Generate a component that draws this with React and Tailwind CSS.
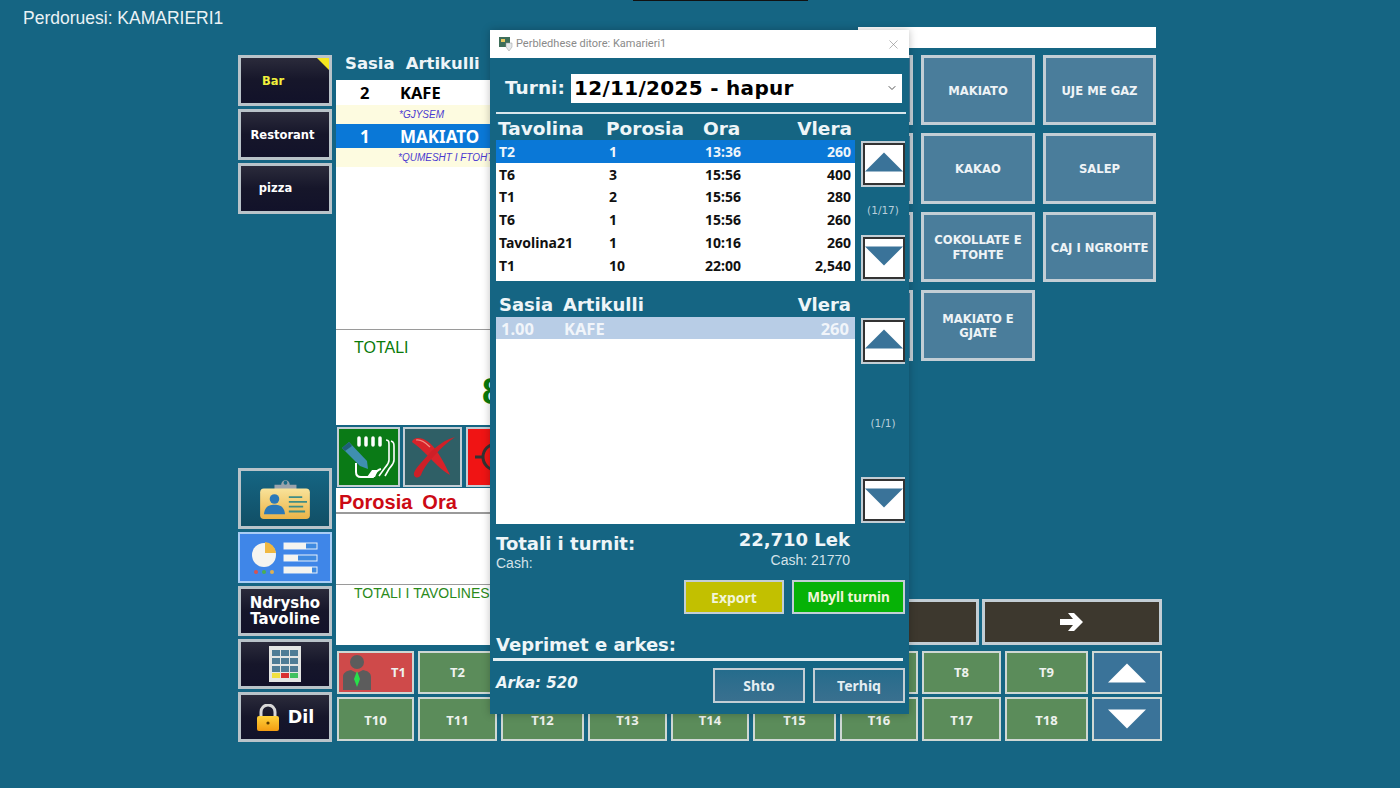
import React from "react";
import { ChevronDown, X } from "lucide-react";

const dejavu = "font-['DejaVu_Sans',sans-serif]";
const noto = "font-['Noto_Sans',sans-serif]";
const liberation = "font-['Liberation_Sans',Arial,sans-serif]";

const darkBtn =
  "flex items-center justify-center border-[3px] border-[#b9c3c9] bg-gradient-to-b from-[#2b2b3b] via-[#16162a] to-[#12122a] text-white font-bold";

const orders = [
  { table: "T2", order: "1", time: "13:36", value: "260", active: true },
  { table: "T6", order: "3", time: "15:56", value: "400" },
  { table: "T1", order: "2", time: "15:56", value: "280" },
  { table: "T6", order: "1", time: "15:56", value: "260" },
  { table: "Tavolina21", order: "1", time: "10:16", value: "260" },
  { table: "T1", order: "10", time: "22:00", value: "2,540" },
];

const products = [
  "", "MAKIATO", "UJE ME GAZ",
  "", "KAKAO", "SALEP",
  "", "COKOLLATE E FTOHTE", "CAJ I NGROHTE",
  "", "MAKIATO E GJATE",
];

// the labels of T3 to T7 sit behind the dialog
const tables = [
  ["T1", "T2", "", "", "", "", "", "T8", "T9"],
  ["T10", "T11", "T12", "T13", "T14", "T15", "T16", "T17", "T18"],
];

const Triangle = ({ down, fill }) => (
  <svg viewBox="0 0 40 20" className="h-[20px] w-[38px]">
    <path d={down ? "M0 0H40L20 20Z" : "M20 0L40 20H0Z"} fill={fill} />
  </svg>
);

const ScrollBtn = ({ down }) => (
  <div className="flex h-[46px] w-[44px] border-[2px] border-[#c3ced5] bg-white">
    <div className="flex flex-1 items-start justify-center border-[2px] border-[#333] pt-[7px]">
      <Triangle down={down} fill="#3a7399" />
    </div>
  </div>
);

const BadgeIcon = () => (
  <svg viewBox="0 0 56 46" className="h-[44px] w-[54px]">
    <defs>
      <linearGradient id="badgeCard" x1="0" y1="0" x2="0" y2="1">
        <stop offset="0" stopColor="#f9e39a" />
        <stop offset="1" stopColor="#eab347" />
      </linearGradient>
    </defs>
    <path d="M17 14V8h7a4.5 4.5 0 0 1 9 0h7v6z" fill="#9aa3ab" />
    <circle cx="28.5" cy="6" r="2" fill="#1a6a85" />
    <rect x="2" y="12" width="52" height="32" rx="4" fill="url(#badgeCard)" />
    <circle cx="17" cy="23" r="5" fill="#2a78b8" />
    <path d="M6 39c1-9 6-10 11-10s10 1 11 10z" fill="#2a78b8" />
    <path d="M32 21h14M32 26h19M32 31h15M32 36h17" stroke="#3f8c85" strokeWidth="2" />
  </svg>
);

const ReportIcon = () => (
  <svg viewBox="0 0 70 36" className="h-[36px] w-[70px]">
    <circle cx="14" cy="15" r="12" fill="#f4f4f0" />
    <path d="M15 2a12 12 0 0 1 11 11H15z" fill="#f0b840" />
    <circle cx="6" cy="32" r="2" fill="#d9534f" />
    <circle cx="14" cy="32" r="2" fill="#4caf50" />
    <circle cx="22" cy="32" r="2" fill="#e0b050" />
    <rect x="34" y="3" width="33" height="6" fill="#3f8ae0" stroke="#e8f0fa" strokeWidth="1" />
    <rect x="34" y="3" width="22" height="6" fill="#f4f4f0" />
    <rect x="34" y="15" width="33" height="6" fill="#3f8ae0" stroke="#e8f0fa" strokeWidth="1" />
    <rect x="34" y="15" width="14" height="6" fill="#f4f4f0" />
    <rect x="34" y="27" width="33" height="6" fill="#3f8ae0" stroke="#e8f0fa" strokeWidth="1" />
    <rect x="34" y="27" width="28" height="6" fill="#f4f4f0" />
  </svg>
);

const CalcIcon = () => (
  <svg viewBox="0 0 32 36" className="h-[36px] w-[32px]">
    <rect width="32" height="36" fill="#e4e6e4" />
    {[4, 12, 20].map((y) =>
      [3, 12, 21].map((x) => <rect key={`${x}-${y}`} x={x} y={y} width="8" height="6" fill="#4f7d96" />)
    )}
    <rect x="3" y="27" width="8" height="5" fill="#f0e040" />
    <rect x="12" y="27" width="8" height="5" fill="#d83030" />
    <rect x="21" y="27" width="8" height="5" fill="#40c060" />
  </svg>
);

const LockIcon = () => (
  <svg viewBox="0 0 24 28" className="h-[28px] w-[24px]">
    <defs>
      <linearGradient id="lockBody" x1="0" y1="0" x2="0" y2="1">
        <stop offset="0" stopColor="#ffd23a" />
        <stop offset="1" stopColor="#f39c12" />
      </linearGradient>
    </defs>
    <path d="M5 13V8a7 7 0 0 1 14 0v5" fill="none" stroke="#d8d8d8" strokeWidth="3" />
    <rect x="1" y="12" width="22" height="15" rx="2" fill="url(#lockBody)" />
    <circle cx="12" cy="19" r="1.6" fill="#5a3a00" />
  </svg>
);

const HandIcon = () => (
  <svg viewBox="0 0 56 52" className="h-[52px] w-[56px]">
    <path d="M18 7v7M25 7v7M32 7v7M39 7v7" stroke="#fff" strokeWidth="3.5" strokeLinecap="round" />
    <path d="M45 9c3 0 3 2 3 5v15c0 4-3 6-5 9l-5 7M50 10c3 1 3 3 3 6v13c0 4-3 6-5 9l-4 7" fill="none" stroke="#fff" strokeWidth="1.6" />
    <path d="M15 32v9c0 3 2 5 5 5h12c2-3 3-7 8-8" fill="none" stroke="#fff" strokeWidth="2" />
    <path d="M26 46l5-7h6l-3 7z" fill="#fff" />
    <path d="M1 17l7-6 18 19 1 8-8-3z" fill="#3f8fb0" />
    <path d="M1 17l7-6 3 4-7 5z" fill="#205f78" />
  </svg>
);

const CrossIcon = () => (
  <svg viewBox="0 0 46 46" className="h-[46px] w-[46px]">
    <path d="M2 8C3 3 11 3 17 7 25 12 33 26 40 41 31 36 24 28 19 23 13 17 8 12 2 8Z" fill="#d8232a" />
    <path d="M45 3C35 6 26 12 19 20 13 27 6 33 4 39 3 44 9 45 11 41 14 33 20 26 26 20 32 13 38 8 45 3Z" fill="#cf1f27" />
    <path d="M6 6C11 5 16 9 20 13" fill="none" stroke="#f08a80" strokeWidth="1.2" />
  </svg>
);

const EuroIcon = () => (
  <svg viewBox="0 0 46 50" className="h-[50px] w-[46px]">
    <rect x="19" y="0" width="6" height="10" rx="2" fill="#fff" />
    <circle cx="23" cy="25" r="13" fill="none" stroke="#333" strokeWidth="3" />
    <path d="M2 25h8M36 25h8" stroke="#333" strokeWidth="3" />
    <text x="23" y="31" textAnchor="middle" fontSize="17" fontWeight="700" fill="#333" fontFamily="Liberation Sans">€</text>
  </svg>
);

const WaiterIcon = () => (
  <svg viewBox="0 0 32 38" className="h-[38px] w-[32px]">
    <circle cx="16" cy="8" r="7" fill="#5c5c5c" />
    <path d="M2 36V23c0-4 3-6 8-7l6 3 6-3c5 1 8 3 8 7v13z" fill="#5c5c5c" />
    <path d="M16 17l3 8-3 8-3-8z" fill="#28e04a" />
  </svg>
);

const TableBtn = ({ name, busy, low }) =>
  busy ? (
    <div className="flex items-center justify-between border-[2px] border-[#cfd8d4] bg-[#cf4a4a] pl-[2px] pr-[6px] text-[13px] font-bold text-[#eef2ee]">
      <WaiterIcon />
      <span>{name}</span>
    </div>
  ) : (
    <div className={`flex items-center justify-center border-[2px] border-[#cfd8d4] bg-[#5b8c5a] text-[13px] font-bold text-[#eef2ee] ${low ? "pt-[3px]" : ""}`}>
      {name}
    </div>
  );

const App = () => {
  return (
    <div className={`relative h-[788px] w-[1400px] overflow-hidden bg-[#156583] ${noto}`}>
      <div className="absolute left-[633px] top-0 h-px w-[175px] bg-[#111]" />
      <div className={`h-[27px] pl-[23px] pt-[8px] text-[17.5px] leading-[20px] text-[#eaf2f5] ${liberation}`}>
        Perdoruesi: KAMARIERI1
      </div>

      <div className="flex gap-[4px] pl-[238px]">
        {/* left column */}
        <div className="flex h-[715px] w-[94px] flex-col justify-between pt-[28px]">
          <div className={`flex flex-col gap-[3px] text-[12px] ${dejavu}`}>
            <div className={`${darkBtn} relative h-[51px] pr-[24px] pt-[3px] !text-[#f2f03c] text-[11.5px]`}>
              Bar
              <span className="absolute right-0 top-0 h-0 w-0 border-l-[12px] border-t-[12px] border-l-transparent border-t-[#f5e61e]" />
            </div>
            <div className={`${darkBtn} h-[51px] pr-[5px] pt-[2px] text-[11.5px]`}>Restorant</div>
            <div className={`${darkBtn} h-[51px] pr-[19px] text-[11.5px]`}>pizza</div>
          </div>
          <div className="flex flex-col gap-[3px]">
            <div className="flex h-[61px] items-center justify-center border-[3px] border-[#b9c3c9] bg-gradient-to-b from-[#156583] to-[#114f66]">
              <BadgeIcon />
            </div>
            <div className="flex h-[51px] items-center justify-center border-[2px] border-[#a9cdf5] bg-[#3f86e8]">
              <ReportIcon />
            </div>
            <div className={`${darkBtn} h-[50px] text-center text-[15px] leading-[16px] ${dejavu}`}>
              Ndrysho
              <br />
              Tavoline
            </div>
            <div className={`${darkBtn} h-[50px]`}>
              <CalcIcon />
            </div>
            <div className={`${darkBtn} h-[50px] gap-[8px] pt-[1px] text-[17.5px] ${dejavu}`}>
              <LockIcon />
              Dil
            </div>
          </div>
        </div>

        {/* order and products */}
        <div className="flex w-[826px] flex-col">
          <div className="flex h-[618px]">
            <div className="w-[341px] pt-[28px]">
              <div className={`flex h-[25px] items-center gap-[11px] pb-[6px] pl-[9px] text-[16.5px] font-bold text-[#eef5f8] ${dejavu}`}>
                <span>Sasia</span>
                <span>Artikulli</span>
              </div>
              <div className="h-[345px] bg-white">
                <div className="h-[249px]">
                  <div className="flex h-[25px] items-center pt-[1px] text-[16.5px] font-bold text-black">
                    <span className="w-[64px] pl-[24px]">2</span>
                    <span>KAFE</span>
                  </div>
                  <div className={`h-[19px] bg-[#fdfbe0] pl-[63px] text-[10px] italic leading-[19px] text-[#4a3ad0] ${liberation}`}>
                    *GJYSEM
                  </div>
                  <div className="flex h-[24px] items-center bg-[#0a78d7] pt-[2px] text-[17px] font-bold text-white">
                    <span className="w-[64px] pl-[24px]">1</span>
                    <span>MAKIATO</span>
                  </div>
                  <div className={`h-[19px] bg-[#fdfbe0] pl-[62px] text-[10px] italic leading-[19px] text-[#4a3ad0] ${liberation}`}>
                    *QUMESHT I FTOHTE
                  </div>
                </div>
                <div className="border-t border-[#9a9a9a] pl-[18px] pt-[9px]">
                  <div className={`text-[16px] leading-[18px] text-[#0a7a0a] ${liberation}`}>TOTALI</div>
                  <div className={`pl-[128px] pt-[15px] text-[36px] font-bold leading-[40px] text-[#0a7a0a] ${liberation}`}>820</div>
                </div>
              </div>
              <div className="flex h-[63px] items-center gap-[3px] pl-[1px]">
                <div className="flex h-[60px] w-[63px] items-center justify-center border-[2px] border-[#c3ced5] bg-[#0a7a16]">
                  <HandIcon />
                </div>
                <div className="flex h-[60px] w-[59px] items-center justify-center border-[2px] border-[#c3ced5] bg-[#2f5f66]">
                  <CrossIcon />
                </div>
                <div className="ml-[1px] flex h-[60px] w-[59px] items-center justify-center border-[2px] border-[#c3ced5] bg-[#f01414]">
                  <EuroIcon />
                </div>
              </div>
              <div className="h-[157px] bg-white">
                <div className={`flex h-[26px] items-center gap-[10px] border-b-[2px] border-[#9a9a9a] pl-[3px] pt-[3px] text-[20px] font-bold text-[#cc0a14] ${liberation}`}>
                  <span>Porosia</span>
                  <span>Ora</span>
                </div>
                <div className="h-[70px]" />
                <div className={`border-t border-[#9a9a9a] pl-[18px] pt-[1px] text-[14px] leading-[15px] text-[#2a8a1a] ${liberation}`}>
                  TOTALI I TAVOLINES
                </div>
              </div>
            </div>

            <div className={`flex flex-1 flex-col ${dejavu}`}>
              <div className="ml-auto mr-[6px] h-[21px] w-[298px] bg-white" />
              <div className="mt-[7px] grid grid-cols-[114px_114px_113px] justify-end gap-x-[8px] gap-y-[8px] pr-[6px]">
                {products.map((name, i) => (
                  <div
                    key={i}
                    className="flex h-[70.4px] items-center justify-center border-[3px] border-[#c3ced5] bg-[#4a7d9b] px-[3px] pt-[2px] text-center text-[11.6px] font-bold leading-[14.5px] text-[#eef3f6]"
                  >
                    {name}
                  </div>
                ))}
              </div>
              <div className="mt-auto flex h-[46px] justify-end gap-[3px]">
                <div className="w-[180px] border-[3px] border-[#c3ced5] bg-[#3d382e]" />
                <div className="flex w-[180px] items-center justify-center border-[3px] border-[#c3ced5] bg-[#3d382e]">
                  <svg viewBox="0 0 26 22" className="h-[22px] w-[26px]">
                    <path d="M1 8h13l-5-6h6l9 9-9 9H9l5-6H1z" fill="#fff" />
                  </svg>
                </div>
              </div>
            </div>
          </div>

          {/* tables */}
          <div className={`mt-[6px] grid grid-cols-[77px_79px_83px_79px_78px_83px_78px_79px_83px_70px] grid-rows-[43px_44px] gap-x-[4px] gap-y-[3px] pl-[1px] ${noto}`}>
            {tables[0].map((t, i) => (
              <TableBtn key={i} name={t} busy={t === "T1"} />
            ))}
            <div className="flex items-center justify-center border-[2px] border-[#cfd8d4] bg-[#3a7399]">
              <Triangle fill="#fff" />
            </div>
            {tables[1].map((t) => (
              <TableBtn key={t} name={t} low />
            ))}
            <div className="flex items-center justify-center border-[2px] border-[#cfd8d4] bg-[#3a7399]">
              <Triangle down fill="#fff" />
            </div>
          </div>
        </div>
      </div>

      {/* daily summary dialog */}
      <div className="absolute left-[490px] top-[30px] h-[684px] w-[419px] bg-[#156583] shadow-[0_0_8px_rgba(0,0,0,0.25)]">
        <div className="flex h-[28px] items-center justify-between bg-white pl-[9px] pr-[8px] font-['Roboto',sans-serif] text-[11px] text-[#8a8a8a]">
          <div className="flex items-center gap-[3px]">
            <svg viewBox="0 0 14 14" className="h-[14px] w-[14px]">
              <rect x="0" y="0" width="11" height="10" fill="#3e6e5a" />
              <rect x="2" y="2" width="4" height="3" fill="#e8c860" />
              <path d="M7 6h6v4l-3 4-3-4z" fill="#e4e8ea" stroke="#999" strokeWidth="0.5" />
            </svg>
            <span>Perbledhese ditore: Kamarieri1</span>
          </div>
          <X size={15} strokeWidth={1} color="#888" />
        </div>

        <div className={`flex h-[54px] items-center pl-[15px] pr-[7px] pt-[6px] ${dejavu}`}>
          <span className="w-[66px] text-[18.5px] font-bold text-[#eef5f8]">Turni:</span>
          <div className="flex h-[29px] flex-1 items-center justify-between bg-white pl-[3px] pr-[4px] text-[20px] font-bold tracking-[0.3px] text-black">
            12/11/2025 - hapur
            <ChevronDown size={12} color="#555" />
          </div>
        </div>

        <div className="ml-[6px] mr-[3px] h-[2px] bg-[#d8e6ec]" />

        <div className="flex pl-[6px] pt-[4px]">
          <div className="w-[359px]">
            <div className={`flex h-[22px] items-center text-[18.5px] font-bold text-[#eef5f8] ${dejavu}`}>
              <span className="w-[110px] pl-[2px]">Tavolina</span>
              <span className="w-[97px]">Porosia</span>
              <span className="w-[60px]">Ora</span>
              <span className="flex-1 pr-[3px] text-right">Vlera</span>
            </div>
            <div className="h-[141px] bg-white text-[14px] font-bold text-[#111]">
              {orders.map((o, i) => (
                <div
                  key={i}
                  className={`flex h-[22.8px] items-center ${o.active ? "bg-[#0a78d7] text-[#eef5fa]" : ""}`}
                >
                  <span className="w-[113px] pl-[3px]">{o.table}</span>
                  <span className="w-[96px]">{o.order}</span>
                  <span className="w-[60px]">{o.time}</span>
                  <span className="flex-1 pr-[4px] text-right">{o.value}</span>
                </div>
              ))}
            </div>
          </div>
          <div className="ml-[6px] flex h-[163px] w-[44px] flex-col items-center justify-between pt-[23px] text-[10.5px] text-[#b9cfdb]">
            <ScrollBtn />
            <span className={dejavu}>(1/17)</span>
            <ScrollBtn down />
          </div>
        </div>

        <div className="flex pl-[6px] pt-[11px]">
          <div className="w-[359px]">
            <div className={`flex h-[25px] items-center text-[18px] font-bold text-[#eef5f8] ${dejavu}`}>
              <span className="w-[67px] pl-[3px]">Sasia</span>
              <span className="flex-1">Artikulli</span>
              <span className="pr-[4px]">Vlera</span>
            </div>
            <div className="h-[207px] bg-white">
              <div className="flex h-[22px] items-center bg-[#b8cde6] pt-[3px] text-[16.5px] font-bold text-[#f1f5fa]">
                <span className="w-[68px] pl-[5px]">1.00</span>
                <span className="flex-1">KAFE</span>
                <span className="pr-[6px]">260</span>
              </div>
            </div>
          </div>
          <div className="ml-[6px] flex h-[231px] w-[44px] flex-col items-center justify-between pt-[26px] text-[10.5px] text-[#b9cfdb]">
            <ScrollBtn />
            <span className={`${dejavu} mt-[6px]`}>(1/1)</span>
            <ScrollBtn down />
          </div>
        </div>

        <div className="flex items-start justify-between pl-[6px] pr-[59px] pt-[9px]">
          <div>
            <div className={`text-[18px] font-bold leading-[22px] text-[#eef5f8] ${dejavu}`}>Totali i turnit:</div>
            <div className={`text-[14px] leading-[16px] text-[#d4e2e9] ${liberation}`}>Cash:</div>
          </div>
          <div className="-mt-[4px] text-right">
            <div className={`text-[18px] font-bold leading-[22px] text-[#eef5f8] ${dejavu}`}>22,710 Lek</div>
            <div className={`text-[14px] leading-[19px] text-[#d4e2e9] ${liberation}`}>Cash: 21770</div>
          </div>
        </div>

        <div className="mt-[9px] flex justify-end gap-[8px] pr-[4px] text-[14px] font-bold text-[#f2f5d8]">
          <div className="flex h-[34px] w-[100px] items-center justify-center border-[2px] border-[#c3ced5] bg-[#c2c000]">
            Export
          </div>
          <div className="flex h-[34px] w-[113px] items-center justify-center border-[2px] border-[#c3ced5] bg-[#06b206] text-[13.5px]">
            Mbyll turnin
          </div>
        </div>

        <div className={`mt-[19px] pl-[6px] text-[18px] font-bold leading-[24px] text-[#eef5f8] ${dejavu}`}>
          Veprimet e arkes:
        </div>
        <div className="ml-[3px] mr-[6px] mt-[1px] h-[3px] bg-[#e4eef2]" />

        <div className="flex items-center justify-between pl-[6px] pr-[4px] pt-[7px]">
          <span className={`-mt-[4px] text-[15px] font-bold italic text-[#eef5f8] ${dejavu}`}>Arka: 520</span>
          <div className="flex gap-[8px] text-[14px] font-bold text-[#e4edf2]">
            <div className="flex h-[35px] w-[92px] items-center justify-center border-[2px] border-[#c3ced5] bg-gradient-to-b from-[#256c8c] to-[#39708f]">
              Shto
            </div>
            <div className="flex h-[35px] w-[92px] items-center justify-center border-[2px] border-[#c3ced5] bg-gradient-to-b from-[#256c8c] to-[#39708f]">
              Terhiq
            </div>
          </div>
        </div>
      </div>
    </div>
  );
};

export default App;
